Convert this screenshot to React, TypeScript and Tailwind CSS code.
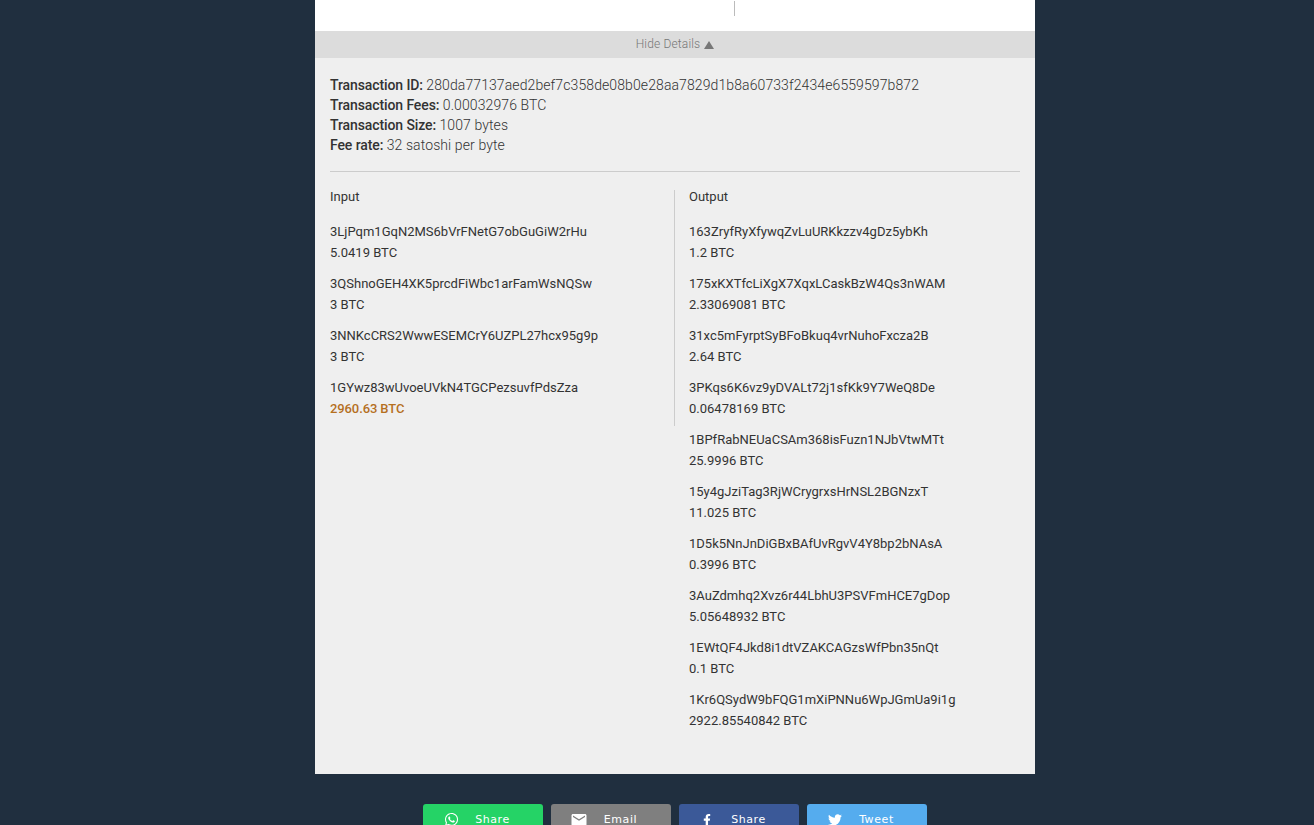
import type { ReactNode } from "react";
import { FaWhatsapp, FaFacebookF, FaTwitter } from "react-icons/fa";
import { MdEmail } from "react-icons/md";

const inputs = [
  { address: "3LjPqm1GqN2MS6bVrFNetG7obGuGiW2rHu", amount: "5.0419 BTC" },
  { address: "3QShnoGEH4XK5prcdFiWbc1arFamWsNQSw", amount: "3 BTC" },
  { address: "3NNKcCRS2WwwESEMCrY6UZPL27hcx95g9p", amount: "3 BTC" },
  { address: "1GYwz83wUvoeUVkN4TGCPezsuvfPdsZza", amount: "2960.63 BTC", highlight: true },
];

const outputs = [
  { address: "163ZryfRyXfywqZvLuURKkzzv4gDz5ybKh", amount: "1.2 BTC" },
  { address: "175xKXTfcLiXgX7XqxLCaskBzW4Qs3nWAM", amount: "2.33069081 BTC" },
  { address: "31xc5mFyrptSyBFoBkuq4vrNuhoFxcza2B", amount: "2.64 BTC" },
  { address: "3PKqs6K6vz9yDVALt72j1sfKk9Y7WeQ8De", amount: "0.06478169 BTC" },
  { address: "1BPfRabNEUaCSAm368isFuzn1NJbVtwMTt", amount: "25.9996 BTC" },
  { address: "15y4gJziTag3RjWCrygrxsHrNSL2BGNzxT", amount: "11.025 BTC" },
  { address: "1D5k5NnJnDiGBxBAfUvRgvV4Y8bp2bNAsA", amount: "0.3996 BTC" },
  { address: "3AuZdmhq2Xvz6r44LbhU3PSVFmHCE7gDop", amount: "5.05648932 BTC" },
  { address: "1EWtQF4Jkd8i1dtVZAKCAGzsWfPbn35nQt", amount: "0.1 BTC" },
  { address: "1Kr6QSydW9bFQG1mXiPNNu6WpJGmUa9i1g", amount: "2922.85540842 BTC" },
];

type Row = { address: string; amount: string; highlight?: boolean };

function TxRow({ row }: { row: Row }) {
  return (
    <div className="mb-[10px] text-[13px] leading-[21px] text-[#333]">
      <div>{row.address}</div>
      <div className={row.highlight ? "font-medium tracking-[-0.1px] text-[#b5701f]" : ""}>{row.amount}</div>
    </div>
  );
}

function InfoLine({ label, value }: { label: string; value: string }) {
  return (
    <div>
      <span className="font-medium tracking-[-0.1px]">{label}</span>{" "}
      <span className="tracking-[0.1px]">{value}</span>
    </div>
  );
}

function ShareButton({ color, icon, label }: { color: string; icon: ReactNode; label: string }) {
  return (
    <button className={`flex h-[40px] w-[120px] items-start rounded-[3px] pl-[18px] pr-[19px] pt-[8px] ${color}`}>
      <span className="flex h-[14px] w-[20px] items-center justify-center">{icon}</span>
      <span className="mt-px flex-1 text-center leading-[14px]">{label}</span>
    </button>
  );
}

export default function App() {
  return (
    <div className="h-[825px] overflow-hidden bg-[#202f3f] font-['Roboto',sans-serif]">
      <div className="ml-[315px] w-[720px]">
        {/* top of the card */}
        <div className="h-[31px] bg-white pl-[419px] pt-px">
          <div className="h-[15px] w-px bg-[#bbb]" />
        </div>

        <div className="flex h-[27px] items-center justify-center gap-1 bg-[#dcdcdc] text-[12px] font-light tracking-[0.15px] text-[#777]">
          <span className="pb-[2px]">Hide Details</span>
          <svg width="10" height="8" viewBox="0 0 10 8" className="fill-[#777]">
            <path d="M5 0 L10 8 L0 8 Z" />
          </svg>
        </div>

        <div className="h-[716px] bg-[#efefef] px-[15px] pt-[17px]">
          <div className="text-[14px] font-light leading-[20px] text-[#333]">
            <InfoLine label="Transaction ID:" value="280da77137aed2bef7c358de08b0e28aa7829d1b8a60733f2434e6559597b872" />
            <InfoLine label="Transaction Fees:" value="0.00032976 BTC" />
            <InfoLine label="Transaction Size:" value="1007 bytes" />
            <InfoLine label="Fee rate:" value="32 satoshi per byte" />
          </div>

          <div className="mt-[16px] h-px bg-[#ccc]" />

          <div className="mt-[18px] flex items-start">
            <div className="h-[236px] w-[345px] border-r border-[#ccc]">
              <div className="mb-[17px] text-[13px] leading-[14px] text-[#333]">Input</div>
              {inputs.map((row) => (
                <TxRow key={row.address} row={row} />
              ))}
            </div>
            <div className="pl-[14px]">
              <div className="mb-[17px] text-[13px] leading-[14px] text-[#333]">Output</div>
              {outputs.map((row) => (
                <TxRow key={row.address} row={row} />
              ))}
            </div>
          </div>
        </div>

        <div className="mt-[30px] flex justify-center gap-2 font-['DejaVu_Sans',sans-serif] text-[11px] tracking-[0.6px] text-white">
          <ShareButton color="bg-[#25d366]" icon={<FaWhatsapp size={15} />} label="Share" />
          <ShareButton color="bg-[#7f7f7f]" icon={<MdEmail size={18} className="mt-[2px]" />} label="Email" />
          <ShareButton color="bg-[#3b5998]" icon={<FaFacebookF size={12} className="mt-px" />} label="Share" />
          <ShareButton color="bg-[#55acee]" icon={<FaTwitter size={14} className="mt-px" />} label="Tweet" />
        </div>
      </div>
    </div>
  );
}
